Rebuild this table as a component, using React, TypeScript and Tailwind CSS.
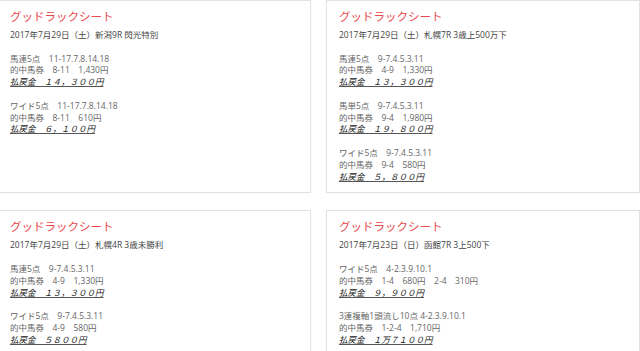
type Group = { bet: string; hit: string; pay: string };
type Race = { date: string; groups: Group[] };

const races: Race[] = [
  {
    date: '2017年7月29日（土）新潟9R 閃光特別',
    groups: [
      { bet: '馬連5点　11-17.7.8.14.18', hit: '的中馬券　8-11　1,430円', pay: '払戻金　１４，３００円' },
      { bet: 'ワイド5点　11-17.7.8.14.18', hit: '的中馬券　8-11　610円', pay: '払戻金　６，１００円' },
    ],
  },
  {
    date: '2017年7月29日（土）札幌7R 3歳上500万下',
    groups: [
      { bet: '馬連5点　9-7.4.5.3.11', hit: '的中馬券　4-9　1,330円', pay: '払戻金　１３，３００円' },
      { bet: '馬単5点　9-7.4.5.3.11', hit: '的中馬券　9-4　1,980円', pay: '払戻金　１９，８００円' },
      { bet: 'ワイド5点　9-7.4.5.3.11', hit: '的中馬券　9-4　580円', pay: '払戻金　５，８００円' },
    ],
  },
  {
    date: '2017年7月29日（土）札幌4R 3歳未勝利',
    groups: [
      { bet: '馬連5点　9-7.4.5.3.11', hit: '的中馬券　4-9　1,330円', pay: '払戻金　１３，３００円' },
      { bet: 'ワイド5点　9-7.4.5.3.11', hit: '的中馬券　4-9　580円', pay: '払戻金　５８００円' },
    ],
  },
  {
    date: '2017年7月23日（日）函館7R 3上500下',
    groups: [
      { bet: 'ワイド5点　4-2.3.9.10.1', hit: '的中馬券　1-4　680円　2-4　310円', pay: '払戻金　９，９００円' },
      { bet: '3連複軸1頭流し10点 4-2.3.9.10.1', hit: '的中馬券　1-2-4　1,710円', pay: '払戻金　１万７１００円' },
    ],
  },
];

function RaceCard({ race }: { race: Race }) {
  return (
    <section className="border border-[#e2e2e2] bg-white px-[12px] pt-[7px] pb-[10px] shadow-[0_0_1px_rgba(0,0,0,0.08)]">
      <h2 className="mb-[3px] text-[11.5px] leading-[18px] font-normal text-[#e8494b]">グッドラックシート</h2>
      <div className="text-[8.5px] leading-[11.8px]">
        <p className="text-[#444]">{race.date}</p>
        {race.groups.map((g, i) => (
          <div key={i} className="mt-[11.8px]">
            <p className="text-[#666]">{g.bet}</p>
            <p className="text-[#666]">{g.hit}</p>
            <p className="italic text-[#222] underline decoration-[#555] underline-offset-[1px]">{g.pay}</p>
          </div>
        ))}
      </div>
    </section>
  );
}

export default function App() {
  return (
    <div
      className="h-[351px] w-[640px] overflow-hidden bg-white"
      style={{ fontFamily: '"Open Sans", "Noto Sans CJK JP", sans-serif' }}
    >
      <div className="-ml-[3px] grid w-[643px] grid-cols-2 gap-x-[15px] gap-y-[17px]">
        {races.map((r, i) => (
          <RaceCard key={i} race={r} />
        ))}
      </div>
    </div>
  );
}
